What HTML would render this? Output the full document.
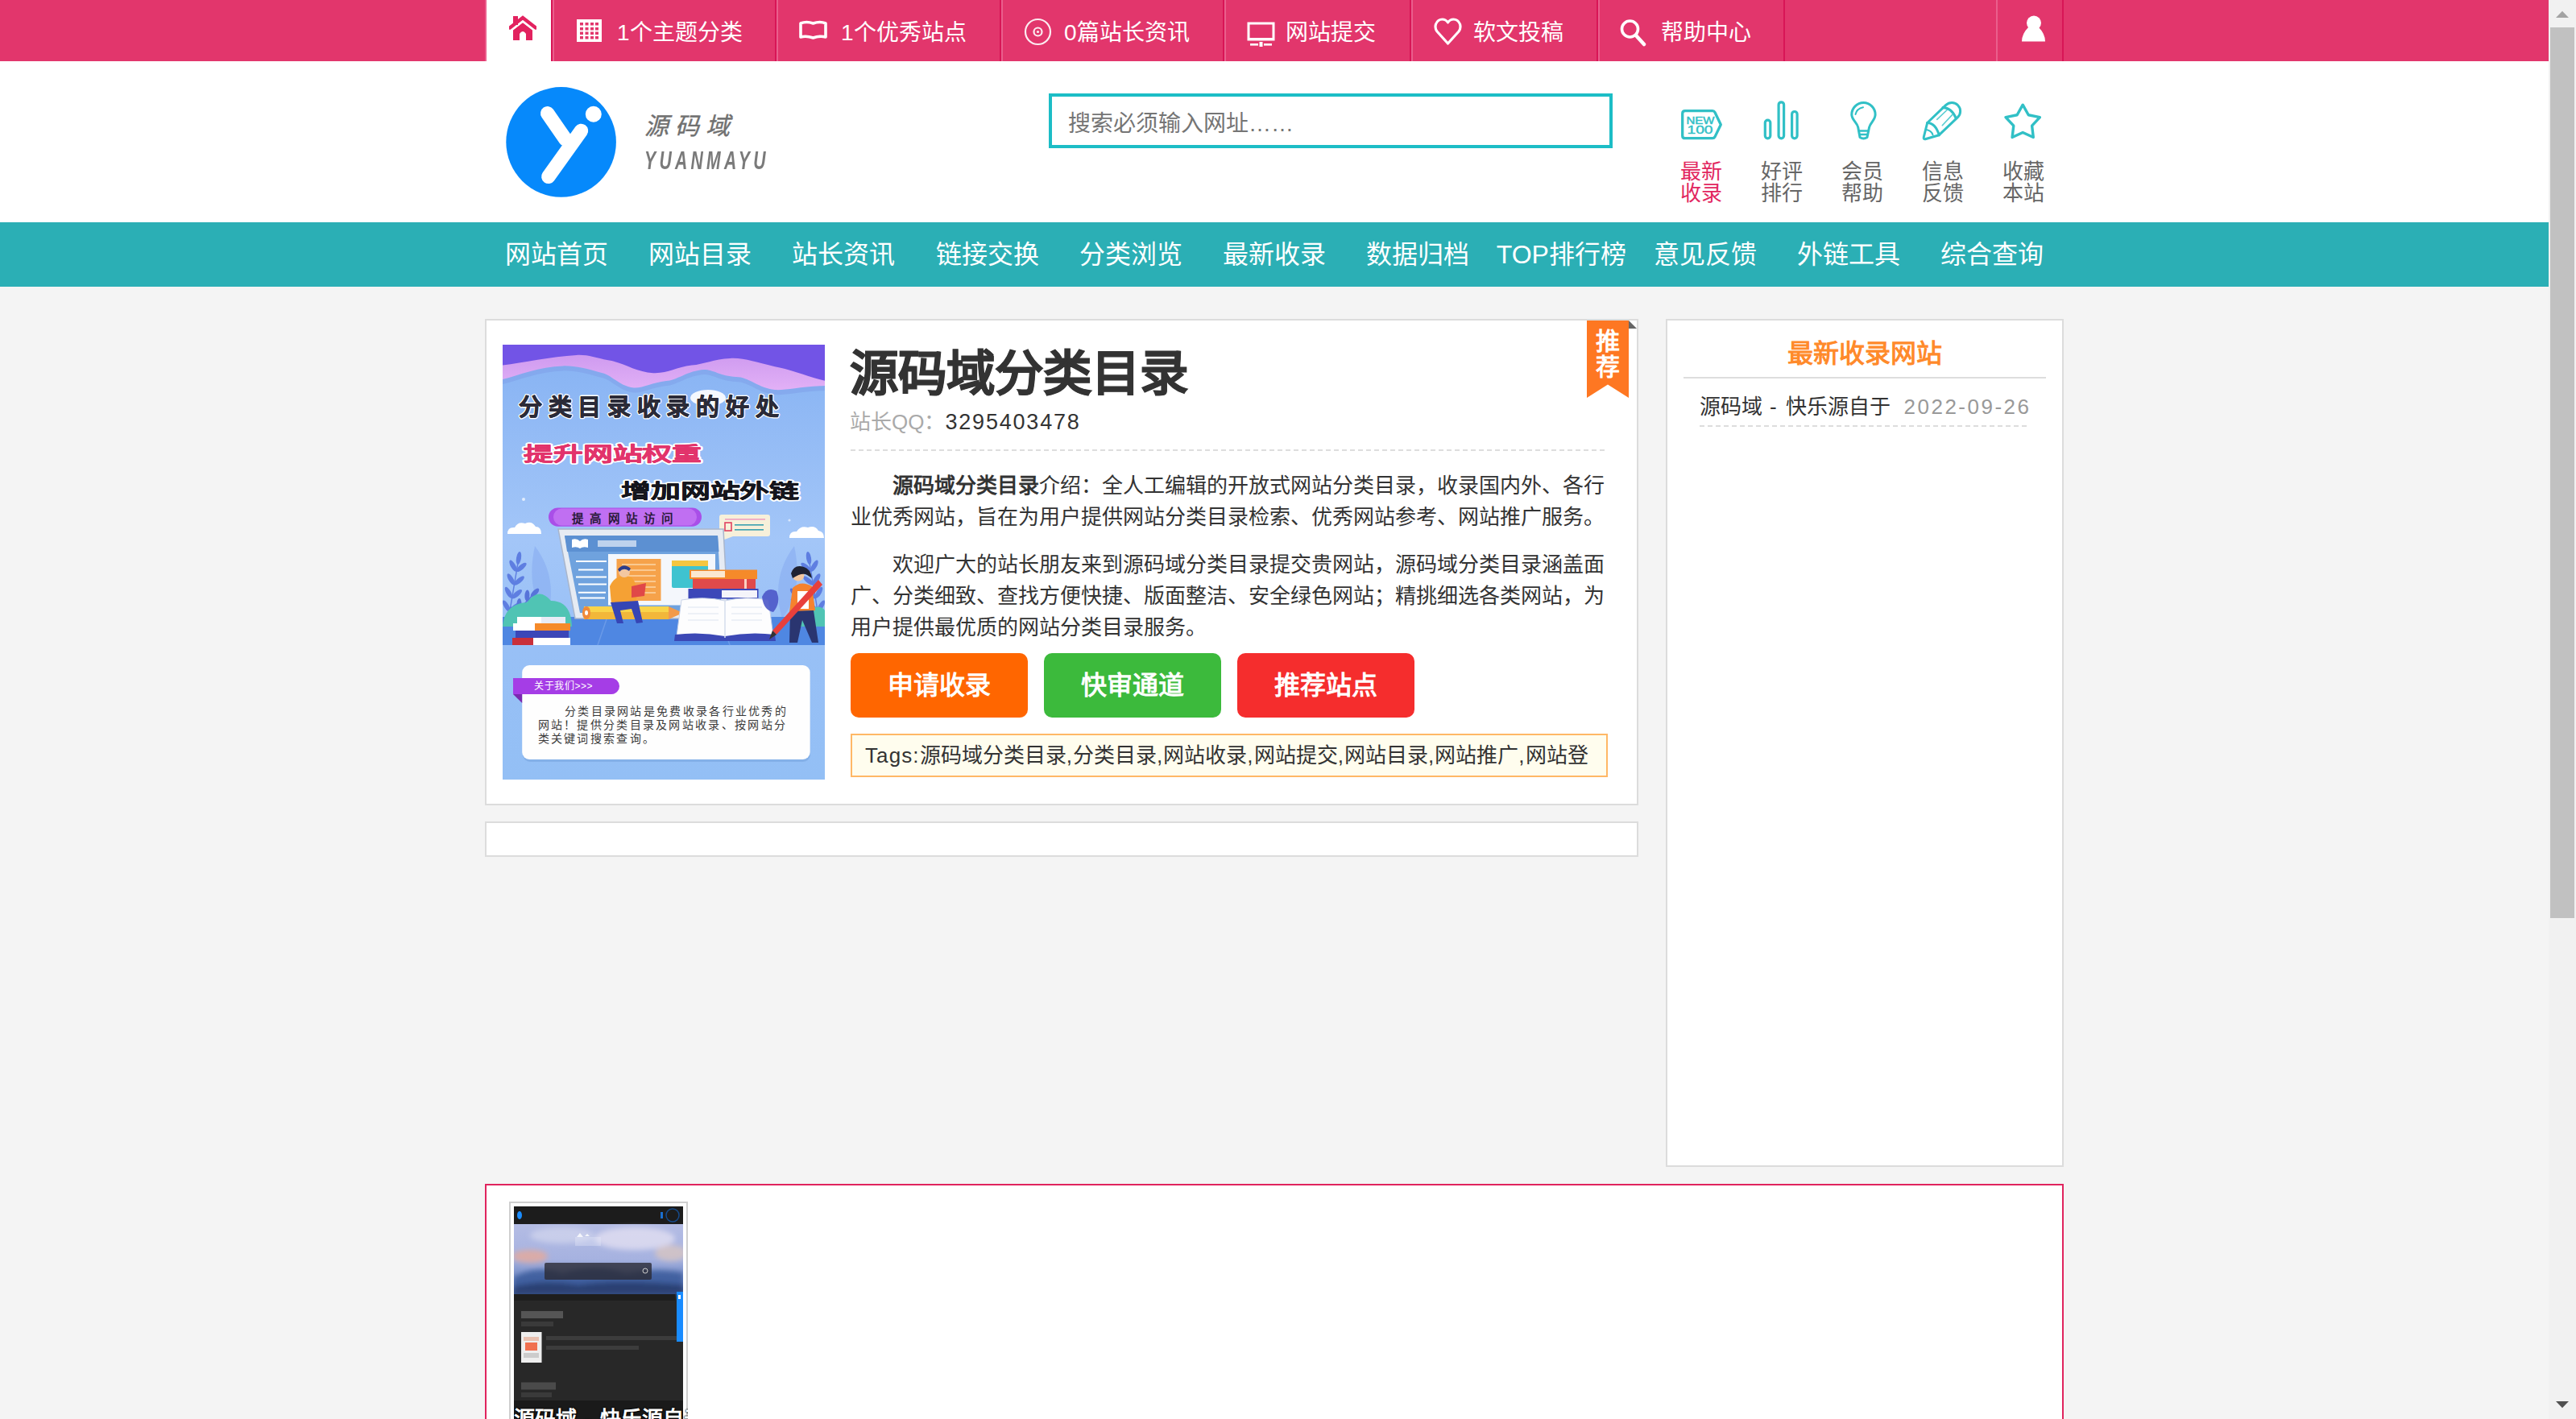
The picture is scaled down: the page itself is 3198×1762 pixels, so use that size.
<!DOCTYPE html>
<html lang="zh-CN"><head><meta charset="utf-8"><title>源码域分类目录</title>
<style>
*{margin:0;padding:0;box-sizing:border-box}
html,body{width:3198px;height:1762px;overflow:hidden}
body{position:relative;background:#f4f4f4;font-family:"Liberation Sans",sans-serif;color:#333}
.a{position:absolute}
#top{left:0;top:0;width:3164px;height:76px;background:#e2366c}
.li{position:absolute;top:0;height:76px;border-left:2px solid #ea5e8c;border-right:2px solid #d81556}
.li .t{position:absolute;top:2px;line-height:77px;font-size:28px;color:#fff;white-space:nowrap}
#hdr{left:0;top:76px;width:3164px;height:200px;background:#fff}
#nav{left:0;top:276px;width:3164px;height:80px;background:#2bafb5}
.nv{position:absolute;top:0;width:178.18px;line-height:80px;text-align:center;font-size:32px;color:#fff;white-space:nowrap}
.hi{position:absolute;top:123.5px;width:100px;text-align:center;font-size:26px;line-height:27px;color:#666}
.btn{position:absolute;top:811px;width:220px;height:80px;border-radius:10px;color:#fff;font-weight:bold;font-size:32px;line-height:80px;text-align:center}
.c{font-style:normal;letter-spacing:1.1px}
.box{position:absolute;background:#fff;border:2px solid #dcdcdc}
#scroll{left:3164px;top:0;width:34px;height:1762px;background:#f1f1f1}
</style></head><body>
<div id="top" class="a">
  <div class="li" style="left:602px;width:84px"><div class="a" style="left:0;top:0;width:80px;height:76px;background:#fff"></div>
    <svg class="a" style="left:28px;top:19px" width="34" height="32" viewBox="0 0 34 32"><g fill="#e2225f"><rect x="5" y="1" width="6" height="11"/><path d="M1 15.5 L17 3 L33 15.5" fill="none" stroke="#e2225f" stroke-width="4.2" stroke-linecap="round"/><path d="M5 18 L17 9 L29 18 V31 H21 V23 Q17 17 13 23 V31 H5 Z"/></g><path d="M1 15.5 L17 3 L33 15.5" fill="none" stroke="#fff" stroke-width="1.6" transform="translate(0,5.2)"/></svg>
  </div>
  <div class="li" style="left:686px;width:278px">
    <svg class="a" style="left:28px;top:24px" width="31" height="28" viewBox="0 0 31 28"><rect x="0" y="0" width="31" height="28" fill="#fff"/><g fill="#e2366c"><rect x="4" y="4" width="4" height="3.5"/><rect x="10.5" y="4" width="4" height="3.5"/><rect x="17" y="4" width="4" height="3.5"/><rect x="23" y="4" width="4" height="3.5"/><rect x="4" y="10" width="4" height="3.5"/><rect x="10.5" y="10" width="4" height="3.5"/><rect x="17" y="10" width="4" height="3.5"/><rect x="23" y="10" width="4" height="3.5"/><rect x="4" y="15.5" width="4" height="3.5"/><rect x="10.5" y="15.5" width="4" height="3.5"/><rect x="17" y="15.5" width="4" height="3.5"/><rect x="23" y="15.5" width="4" height="3.5"/><rect x="4" y="21" width="4" height="3.5"/><rect x="10.5" y="21" width="4" height="3.5"/><rect x="17" y="21" width="4" height="3.5"/><rect x="23" y="21" width="4" height="3.5"/></g></svg>
    <span class="t" style="left:78px">1个主题分类</span></div>
  <div class="li" style="left:964px;width:279px">
    <svg class="a" style="left:25px;top:25px" width="37" height="27" viewBox="0 0 37 27"><path d="M3 4 Q10 1 18.5 4 Q27 1 34 4 V21 Q27 19 18.5 22 Q10 19 3 21 Z" fill="none" stroke="#fff" stroke-width="3.6" stroke-linejoin="round"/></svg>
    <span class="t" style="left:78px">1个优秀站点</span></div>
  <div class="li" style="left:1243px;width:277px">
    <svg class="a" style="left:26px;top:22px" width="35" height="35" viewBox="0 0 35 35"><circle cx="17.5" cy="17.5" r="15.5" fill="none" stroke="#fff" stroke-width="2.2" opacity=".9"/><circle cx="17.5" cy="17.5" r="5" fill="none" stroke="#fff" stroke-width="2.2" opacity=".9"/><circle cx="17.5" cy="17.5" r="1.6" fill="#fff" opacity=".9"/></svg>
    <span class="t" style="left:76px">0篇站长资讯</span></div>
  <div class="li" style="left:1520px;width:232px">
    <svg class="a" style="left:26px;top:27px" width="35" height="32" viewBox="0 0 35 32"><rect x="2" y="2" width="31" height="20" fill="none" stroke="#fff" stroke-width="3"/><rect x="1" y="20" width="33" height="3" fill="#fff"/><rect x="4" y="27" width="10" height="2.6" fill="#fff"/><rect x="21" y="27" width="10" height="2.6" fill="#fff"/><rect x="15.5" y="25" width="4" height="6" fill="#fff"/></svg>
    <span class="t" style="left:74px">网站提交</span></div>
  <div class="li" style="left:1752px;width:232px">
    <svg class="a" style="left:26px;top:22px" width="35" height="35" viewBox="0 0 35 35"><path d="M17.5 32 L4 17 Q1 13 2.5 8 Q5 2 10.5 2 Q15 2 17.5 6 Q20 2 24.5 2 Q30 2 32.5 8 Q34 13 31 17 Z" fill="none" stroke="#fff" stroke-width="3.2" stroke-linejoin="round"/></svg>
    <span class="t" style="left:75px">软文投稿</span></div>
  <div class="li" style="left:1984px;width:232px;border-left-color:#ea5e8c">
    <svg class="a" style="left:24px;top:23px" width="35" height="36" viewBox="0 0 35 36"><circle cx="13.5" cy="13" r="10" fill="none" stroke="#fff" stroke-width="3.6"/><path d="M21 21 L31 32" stroke="#fff" stroke-width="4.5" stroke-linecap="round"/></svg>
    <span class="t" style="left:76px">帮助中心</span></div>
  <div class="li" style="left:2478px;width:84px">
    <svg class="a" style="left:29px;top:18px" width="32" height="35" viewBox="0 0 32 35"><circle cx="16" cy="10.5" r="9" fill="#fff"/><path d="M9 16 Q1 24 1 33.5 H30 Q30 24 22 16 Z" fill="#fff"/></svg>
  </div>
</div>
<div id="hdr" class="a">
  <svg class="a" style="left:626px;top:30px" width="142" height="142" viewBox="0 0 142 142"><circle cx="70.6" cy="70.4" r="68.3" fill="#0689fb"/><path d="M53.7 34.7 L76 67" stroke="#fff" stroke-width="17.4" stroke-linecap="round"/><path d="M95.5 56.4 L54.8 113.4" stroke="#fff" stroke-width="17.4" stroke-linecap="round"/><circle cx="110.8" cy="35.7" r="10" fill="#fff"/></svg>
  <div class="a" style="left:800px;top:61px;font-size:30px;line-height:40px;color:#707070;font-style:italic;letter-spacing:8px;white-space:nowrap;-webkit-text-stroke:.4px #707070">源码域</div>
  <div class="a" style="left:800px;top:102.5px;font-size:32px;line-height:40px;color:#7a7a7a;font-style:italic;font-weight:bold;letter-spacing:6.5px;white-space:nowrap;transform:scaleX(.66);transform-origin:0 0">YUANMAYU</div>
  <div class="a" style="left:1302px;top:40px;width:700px;height:68px;border:4px solid #1cbdc6;background:#fff"></div>
  <div class="a" style="left:1326px;top:43.5px;line-height:68px;font-size:28px;color:#757575;white-space:nowrap">搜索必须输入网址……</div>
  <svg class="a" style="left:2084px;top:56px" width="58" height="46" viewBox="0 0 58 46"><path d="M8 5.7 H42 Q44 5.7 45 7.5 L52.3 22.7 L45 37.9 Q44 39.7 42 39.7 H8 Q4.7 39.7 4.7 36.4 V9 Q4.7 5.7 8 5.7 Z" fill="none" stroke="#31c0c6" stroke-width="3.3" stroke-linejoin="round"/><text x="9.5" y="21.8" font-family="Liberation Sans" font-size="13" fill="#31c0c6" stroke="#31c0c6" stroke-width=".5" textLength="35" lengthAdjust="spacingAndGlyphs">NEW</text><text x="10.5" y="33.8" font-family="Liberation Sans" font-size="14.5" fill="#31c0c6" stroke="#31c0c6" stroke-width=".4" textLength="32" lengthAdjust="spacingAndGlyphs">100</text></svg>
  <svg class="a" style="left:2186px;top:46px" width="52" height="56" viewBox="0 0 52 56"><g fill="none" stroke="#31c0c6" stroke-width="3.2"><rect x="5.3" y="27.1" width="6.5" height="22.7" rx="3.25"/><rect x="22.1" y="4.8" width="6.5" height="45" rx="3.25"/><rect x="38.6" y="16.5" width="6.5" height="33.3" rx="3.25"/></g></svg>
  <svg class="a" style="left:2290px;top:46px" width="46" height="56" viewBox="0 0 46 56"><g fill="none" stroke="#31c0c6" stroke-width="3" stroke-linecap="round" stroke-linejoin="round"><path d="M16.7 36 C15.5 30 8.8 27 8.8 20.25 A14.65 14.65 0 1 1 38.1 20.25 C38.1 27 32 30 30.6 36 L28 48.5 Q23.5 51.5 19 48.5 Z"/><path d="M17.8 40.5 H29.6 M18.8 45 H28.4" stroke-width="2.4"/><path d="M13.5 20 Q15 13 23 11.3" stroke-width="2"/></g></svg>
  <svg class="a" style="left:2383px;top:46px" width="62" height="56" viewBox="0 0 62 56"><g fill="none" stroke="#31c0c6" stroke-width="3" stroke-linejoin="round" stroke-linecap="round"><path d="M9.7 30.5 L32.8 8.4 A10.5 10.5 0 0 1 47.4 23.6 L24.3 45.7 L8 50.5 Q4.5 51.5 5.3 48 Z"/><path d="M9.7 30.5 Q20 31 24.3 45.7"/><path d="M29 11.6 Q40 12 45.3 24.9"/><path d="M21.7 26.3 L34.2 14.5 M28.3 33.7 L40.8 20.4" stroke-width="1.6" opacity=".8"/><path d="M8.4 38.9 Q15 40 16.5 45.5" stroke-width="2"/></g></svg>
  <svg class="a" style="left:2484px;top:48px" width="56" height="54" viewBox="0 0 56 54"><path d="M27.20 6.20 L34.25 18.79 L48.41 21.61 L38.61 32.21 L40.31 46.54 L27.20 40.50 L14.09 46.54 L15.79 32.21 L5.99 21.61 L20.15 18.79 Z" fill="none" stroke="#31c0c6" stroke-width="3.4" stroke-linejoin="round"/></svg>
  <div class="hi" style="left:2062px;color:#e2265f">最新<br>收录</div>
  <div class="hi" style="left:2162px">好评<br>排行</div>
  <div class="hi" style="left:2262px">会员<br>帮助</div>
  <div class="hi" style="left:2362px">信息<br>反馈</div>
  <div class="hi" style="left:2462px">收藏<br>本站</div>
</div>
<div id="nav" class="a">
  <div class="nv" style="left:602px">网站首页</div>
  <div class="nv" style="left:780.18px">网站目录</div>
  <div class="nv" style="left:958.36px">站长资讯</div>
  <div class="nv" style="left:1136.55px">链接交换</div>
  <div class="nv" style="left:1314.73px">分类浏览</div>
  <div class="nv" style="left:1492.91px">最新收录</div>
  <div class="nv" style="left:1671.09px">数据归档</div>
  <div class="nv" style="left:1849.27px">TOP排行榜</div>
  <div class="nv" style="left:2027.45px">意见反馈</div>
  <div class="nv" style="left:2205.64px">外链工具</div>
  <div class="nv" style="left:2383.82px">综合查询</div>
</div>
<div class="box" style="left:602px;top:396px;width:1432px;height:604px"></div>
<div id="poster" class="a" style="left:624px;top:428px;width:400px;height:540px;overflow:hidden;background:#95c0f5"><svg class="a" style="left:0;top:0" width="400" height="540" viewBox="0 0 400 540">
<defs>
<linearGradient id="pbg" x1="0" y1="0" x2="0" y2="1"><stop offset="0" stop-color="#86b2f3"/><stop offset=".45" stop-color="#a3c6f8"/><stop offset=".7" stop-color="#98c0f6"/><stop offset="1" stop-color="#93bff5"/></linearGradient>
<linearGradient id="lav" x1="0" y1="0" x2="0" y2="1"><stop offset="0" stop-color="#c994ee"/><stop offset="1" stop-color="#e2b0f6"/></linearGradient>
</defs>
<rect width="400" height="540" fill="url(#pbg)"/>
<path d="M0 0 H400 V51 C370 52 350 57 338 56 C318 54 305 40 290 40 C270 39 262 31 250 31 C230 32 215 45 203 45 C185 47 175 54 163 53.5 C145 52 135 37 123 35 C105 30 90 26 75 26.4 C45 27 20 38 0 43 Z" fill="#7d9de8" opacity=".5" transform="translate(0,6)"/>
<path d="M0 0 H400 V51 C370 52 350 57 338 56 C318 54 305 40 290 40 C270 39 262 31 250 31 C230 32 215 45 203 45 C185 47 175 54 163 53.5 C145 52 135 37 123 35 C105 30 90 26 75 26.4 C45 27 20 38 0 43 Z" fill="url(#lav)"/>
<path d="M0 0 H400 V44.7 C380 40 355 30 338 27.2 C315 22 300 16 282.5 16.9 C262 18 250 24 234.7 25.6 C215 28 205 36 187 35.2 C165 34 150 22 131 19.3 C115 16 105 12 91.5 12.9 C60 15 25 22 0 25.6 Z" fill="#7254e6"/>
<ellipse cx="255" cy="66" rx="22" ry="10" fill="#fff" opacity=".9"/>
<g font-family="Liberation Sans" font-weight="bold" stroke-linejoin="round" paint-order="stroke" lengthAdjust="spacingAndGlyphs">
<text x="20" y="88" font-size="29" letter-spacing="7.7" fill="#2b2b38" stroke="#fff" stroke-width="3.5">分类目录收录的好处</text>
<text x="20" y="88" font-size="29" letter-spacing="7.7" fill="#2b2b38" stroke="#2b2b38" stroke-width="0.9">分类目录收录的好处</text>
<text x="26" y="144" font-size="24" textLength="221" lengthAdjust="spacingAndGlyphs" fill="#e2336b" stroke="#fff" stroke-width="4">提升网站权重</text>
<text x="26" y="144" font-size="24" textLength="221" lengthAdjust="spacingAndGlyphs" fill="#e2336b" stroke="#e2336b" stroke-width="0.5">提升网站权重</text>
<text x="147" y="190" font-size="24" textLength="221" lengthAdjust="spacingAndGlyphs" fill="#15151c" stroke="#fff" stroke-width="4">增加网站外链</text>
<text x="147" y="190" font-size="24" textLength="221" lengthAdjust="spacingAndGlyphs" fill="#15151c" stroke="#15151c" stroke-width="0.5">增加网站外链</text>
</g>
<rect x="57" y="202.4" width="190" height="23.3" rx="11.6" fill="#a94fe8"/>
<rect x="63" y="203.5" width="178" height="21" rx="10.5" fill="#c06ff2"/>
<text x="86" y="221" font-family="Liberation Sans" font-weight="bold" font-size="14.5" letter-spacing="8.3" fill="#2a1a3a">提高网站访问</text>
<g fill="#fff">
<path d="M6 235 Q6 226 15 227 Q19 219 28 222 Q36 218 41 226 Q48 226 48 235 Z"/>
<path d="M356 240 Q356 231 365 232 Q370 224 379 227 Q388 224 392 231 Q399 232 399 240 Z"/>
<circle cx="26" cy="192" r="2" opacity=".7"/><circle cx="356" cy="218" r="1.6" opacity=".6"/><circle cx="110" cy="260" r="1.4" opacity=".6"/>
</g>
<rect x="269" y="211" width="63" height="27" rx="3" fill="#f7f0da"/>
<path d="M278 236 L262 247 L286 238 Z" fill="#f7f0da"/>
<rect x="276" y="216" width="50" height="1.6" fill="#f0a0c0"/>
<rect x="276" y="221" width="8" height="10" fill="none" stroke="#e04060" stroke-width="1.6"/>
<rect x="288" y="223" width="36" height="1.6" fill="#3aa0b0"/><rect x="288" y="229" width="36" height="1.6" fill="#3aa0b0"/>
<!-- leaves -->
<g opacity=".95"><g fill="#8db2f3" opacity=".8"><path d="M40 250 Q70 290 55 340 Q28 305 40 250 Z"/><path d="M362 250 Q332 290 347 340 Q374 305 362 250 Z"/></g><path d="M6.0 348.0 L20.0 265.0" stroke="#5b7be0" stroke-width="1.5"/><ellipse cx="14.9" cy="326.2" rx="8.0" ry="3.0" transform="rotate(-40.4 14.9 326.2)" fill="#5b7be0"/><ellipse cx="4.7" cy="324.5" rx="8.0" ry="3.0" transform="rotate(-120.4 4.7 324.5)" fill="#5b7be0"/><ellipse cx="17.7" cy="309.6" rx="8.0" ry="3.0" transform="rotate(-40.4 17.7 309.6)" fill="#5b7be0"/><ellipse cx="7.5" cy="307.9" rx="8.0" ry="3.0" transform="rotate(-120.4 7.5 307.9)" fill="#5b7be0"/><ellipse cx="20.5" cy="293.0" rx="8.0" ry="3.0" transform="rotate(-40.4 20.5 293.0)" fill="#5b7be0"/><ellipse cx="10.3" cy="291.3" rx="8.0" ry="3.0" transform="rotate(-120.4 10.3 291.3)" fill="#5b7be0"/><ellipse cx="23.3" cy="276.4" rx="8.0" ry="3.0" transform="rotate(-40.4 23.3 276.4)" fill="#5b7be0"/><ellipse cx="13.1" cy="274.7" rx="8.0" ry="3.0" transform="rotate(-120.4 13.1 274.7)" fill="#5b7be0"/><ellipse cx="20.0" cy="265.0" rx="8.0" ry="3.0" transform="rotate(-80.4 20.0 265.0)" fill="#5b7be0"/><path d="M0.0 350.0 L40.0 308.0" stroke="#5470d8" stroke-width="1.5"/><ellipse cx="17.0" cy="338.7" rx="7.0" ry="3.0" transform="rotate(-6.4 17.0 338.7)" fill="#5470d8"/><ellipse cx="10.4" cy="332.5" rx="7.0" ry="3.0" transform="rotate(-86.4 10.4 332.5)" fill="#5470d8"/><ellipse cx="27.0" cy="328.2" rx="7.0" ry="3.0" transform="rotate(-6.4 27.0 328.2)" fill="#5470d8"/><ellipse cx="20.4" cy="322.0" rx="7.0" ry="3.0" transform="rotate(-86.4 20.4 322.0)" fill="#5470d8"/><ellipse cx="37.0" cy="317.7" rx="7.0" ry="3.0" transform="rotate(-6.4 37.0 317.7)" fill="#5470d8"/><ellipse cx="30.4" cy="311.5" rx="7.0" ry="3.0" transform="rotate(-86.4 30.4 311.5)" fill="#5470d8"/><ellipse cx="40.0" cy="308.0" rx="7.0" ry="3.0" transform="rotate(-46.4 40.0 308.0)" fill="#5470d8"/><path d="M394.0 348.0 L380.0 265.0" stroke="#5b7be0" stroke-width="1.5"/><ellipse cx="395.3" cy="324.5" rx="8.0" ry="3.0" transform="rotate(-59.6 395.3 324.5)" fill="#5b7be0"/><ellipse cx="385.1" cy="326.2" rx="8.0" ry="3.0" transform="rotate(-139.6 385.1 326.2)" fill="#5b7be0"/><ellipse cx="392.5" cy="307.9" rx="8.0" ry="3.0" transform="rotate(-59.6 392.5 307.9)" fill="#5b7be0"/><ellipse cx="382.3" cy="309.6" rx="8.0" ry="3.0" transform="rotate(-139.6 382.3 309.6)" fill="#5b7be0"/><ellipse cx="389.7" cy="291.3" rx="8.0" ry="3.0" transform="rotate(-59.6 389.7 291.3)" fill="#5b7be0"/><ellipse cx="379.5" cy="293.0" rx="8.0" ry="3.0" transform="rotate(-139.6 379.5 293.0)" fill="#5b7be0"/><ellipse cx="386.9" cy="274.7" rx="8.0" ry="3.0" transform="rotate(-59.6 386.9 274.7)" fill="#5b7be0"/><ellipse cx="376.7" cy="276.4" rx="8.0" ry="3.0" transform="rotate(-139.6 376.7 276.4)" fill="#5b7be0"/><ellipse cx="380.0" cy="265.0" rx="8.0" ry="3.0" transform="rotate(-99.6 380.0 265.0)" fill="#5b7be0"/><path d="M400.0 350.0 L362.0 308.0" stroke="#5470d8" stroke-width="1.5"/><ellipse cx="390.2" cy="332.5" rx="7.0" ry="3.0" transform="rotate(-92.1 390.2 332.5)" fill="#5470d8"/><ellipse cx="383.6" cy="338.5" rx="7.0" ry="3.0" transform="rotate(-172.1 383.6 338.5)" fill="#5470d8"/><ellipse cx="380.7" cy="322.0" rx="7.0" ry="3.0" transform="rotate(-92.1 380.7 322.0)" fill="#5470d8"/><ellipse cx="374.1" cy="328.0" rx="7.0" ry="3.0" transform="rotate(-172.1 374.1 328.0)" fill="#5470d8"/><ellipse cx="371.2" cy="311.5" rx="7.0" ry="3.0" transform="rotate(-92.1 371.2 311.5)" fill="#5470d8"/><ellipse cx="364.6" cy="317.5" rx="7.0" ry="3.0" transform="rotate(-172.1 364.6 317.5)" fill="#5470d8"/><ellipse cx="362.0" cy="308.0" rx="7.0" ry="3.0" transform="rotate(-132.1 362.0 308.0)" fill="#5470d8"/></g>
<!-- floor -->
<rect x="0" y="338" width="400" height="35" fill="#4f87e2"/>
<path d="M130 338 L118 373 M270 338 L282 373" stroke="#6a9ae8" stroke-width="1.5"/>
<!-- bush -->
<path d="M0 350 Q2 322 30 320 Q45 300 60 318 Q85 318 86 350 Z" fill="#50c4b4"/>
<path d="M360 350 Q362 330 380 328 Q395 322 400 330 V350 Z" fill="#50c4b4"/>
<!-- laptop -->
<path d="M69 229 L274 229 L280 340 L90 340 Z" fill="#e6ebf3" stroke="#a9b6cc" stroke-width="1.5"/>
<path d="M77 237 L267 237 L272 333 L96 333 Z" fill="#6fa2de"/>
<path d="M77 237 L267 237 L268.5 257 L80 257 Z" fill="#5c90d2"/>
<path d="M86 242 Q92 240 96 244 Q100 240 106 242 V252 Q100 250 96 253 Q92 250 86 252 Z" fill="#fff"/>
<rect x="118" y="243" width="48" height="8" fill="#fff" opacity=".6"/>
<rect x="131" y="260" width="133" height="63.5" fill="#f4f7fc"/>
<rect x="141.5" y="266" width="55" height="52" fill="#f6a24a"/>
<g stroke="#fbd6a8" stroke-width="1.5"><path d="M148 273 H190 M148 280 H190 M148 287 H190 M148 294 H190 M148 301 H190 M148 308 H190"/></g>
<rect x="210" y="268" width="45" height="34" rx="2" fill="#3fc3d0"/>
<rect x="210" y="268" width="45" height="7" fill="#f5c640"/>
<g stroke="#fff" stroke-width="2"><path d="M91 269 H129 M94 279.5 H125 M91 288.5 H129 M94 297.5 H129 M94 307.7 H128 M96 314.5 H127"/></g>
<!-- pencil -->
<rect x="101" y="325" width="105" height="16" fill="#f9d44a"/>
<rect x="101" y="332" width="105" height="9" fill="#f2b73a"/>
<path d="M206 325 L224 333 L206 341 Z" fill="#f29a4a"/>
<ellipse cx="104" cy="333" rx="5" ry="8" fill="#f08a3a"/><ellipse cx="104" cy="333" rx="2" ry="3" fill="#fff"/>
<!-- man -->
<path d="M133 300 Q140 284 158 288 Q168 292 166 320 L135 322 Z" fill="#f5a134"/>
<circle cx="151" cy="282" r="7" fill="#f3c7a0"/><path d="M143 279 Q150 270 159 278 L157 281 Q150 276 145 282 Z" fill="#2e3d8a"/>
<path d="M160 300 L178 296 L176 312 L160 314 Z" fill="#e04848"/>
<path d="M134 320 L168 318 L174 345 L166 346 L160 328 L146 330 L150 346 L142 346 Z" fill="#3645b5"/>
<!-- book stack right -->
<rect x="232" y="279.5" width="84" height="11.5" fill="#f58a2a"/><rect x="234" y="281" width="42" height="8" fill="#fbe8d0"/>
<rect x="236" y="291" width="78" height="12" fill="#e04a4a"/><rect x="300" y="291" width="3" height="12" fill="#fbd0c0"/>
<rect x="230.5" y="303" width="87" height="12.6" fill="#3b47b8"/><rect x="272" y="305" width="44" height="9" fill="#f4f4fa"/>
<!-- open book -->
<path d="M222 317 Q250 312 276 318 Q302 312 330 317 L336 362 Q305 358 276 364 Q247 358 216 362 Z" fill="#fdfdfe" stroke="#c9d3e8" stroke-width="1"/>
<path d="M214 360 Q245 356 276 362 Q307 356 338 360 L339 368 L213 368 Z" fill="#3c48b5"/>
<path d="M276 318 V364" stroke="#d4dcec" stroke-width="1.5"/>
<g stroke="#dde4f0" stroke-width="1"><path d="M230 326 H268 M230 334 H268 M230 342 H268 M284 326 H322 M284 334 H322 M284 342 H322"/></g>
<!-- woman -->
<path d="M360 302 Q370 292 384 300 L388 330 L356 332 Z" fill="#f5822e"/>
<rect x="366" y="306" width="14" height="22" fill="#fff"/>
<circle cx="367" cy="286" r="7.5" fill="#f3c7a0"/><path d="M358 284 Q362 272 374 276 Q382 278 384 290 L378 286 Q372 282 360 290 Z" fill="#1f2233"/>
<path d="M357 331 L386 330 L392 370 L384 370 L372 342 L366 370 L356 370 Z" fill="#2a3570"/>
<path d="M335 355 L392 292 L397 298 L340 360 Z" fill="#e8403c"/>
<path d="M335 355 L340 360 L331 366 Z" fill="#333"/>
<path d="M322 313 Q328 300 340 306 Q346 320 336 332 Q324 330 322 313 Z" fill="#4d58c8" opacity=".9"/>
<!-- left books -->
<rect x="18" y="338" width="60" height="8" fill="#fff"/><rect x="48" y="338" width="30" height="8" fill="#e8ecf6"/>
<rect x="13" y="346" width="71" height="9" fill="#fff"/><rect x="40" y="346" width="44" height="9" fill="#f58a2a"/>
<rect x="16" y="355" width="66" height="9" fill="#3b47b8"/>
<rect x="12" y="364" width="72" height="9" fill="#c9303a"/><rect x="38" y="364" width="46" height="9" fill="#fff"/>
<!-- bottom card -->
<rect x="25" y="400" width="357" height="118" rx="9" fill="#7aa6e0" opacity=".6"/>
<rect x="24.2" y="398" width="357.5" height="117" rx="9" fill="#fefefe"/>
<path d="M13 434 L24.2 434 L24.2 445 Z" fill="#7a2ab0"/>
<path d="M13 414 H135 A10 10 0 0 1 135 434 H13 Z" fill="#a53de6"/>
<text x="39" y="428" font-family="Liberation Sans" font-size="12" letter-spacing="0.6" fill="#fff">关于我们&gt;&gt;&gt;</text>
<g font-family="Liberation Sans" font-size="14" letter-spacing="2.3" fill="#3a3a3a">
<text x="77" y="459.5">分类目录网站是免费收录各行业优秀的</text>
<text x="43.5" y="476.5">网站！提供分类目录及网站收录、按网站分</text>
<text x="43.5" y="493.5">类关键词搜索查询。</text>
</g>
</svg>
</div>
<div class="a" style="left:1055px;top:422px;font-size:60.5px;line-height:84px;font-weight:bold;color:#333;white-space:nowrap;-webkit-text-stroke:1px #333">源码域分类目录</div>
<div class="a" style="left:1055px;top:505px;font-size:26px;line-height:39px;color:#aaa;white-space:nowrap">站长QQ：<span style="color:#333;font-family:'Liberation Sans';font-size:27px;letter-spacing:1.8px">3295403478</span></div>
<div class="a" style="left:1056px;top:558px;width:940px;height:2px;background:repeating-linear-gradient(90deg,#ddd 0 6px,transparent 6px 10px)"></div>
<div class="a" style="left:1056px;top:584px;width:940px;font-size:26px;line-height:39px;color:#333;text-indent:52px">
<p><b>源码域分类目录</b>介绍：全人工编辑的开放式网站分类目录，收录国内外、各行业优秀网站，旨在为用户提供网站分类目录检索、优秀网站参考、网站推广服务。</p>
<p style="margin-top:20px">欢迎广大的站长朋友来到源码域分类目录提交贵网站，源码域分类目录涵盖面广、分类细致、查找方便快捷、版面整洁、安全绿色网站；精挑细选各类网站，为用户提供最优质的网站分类目录服务。</p>
</div>
<div class="btn" style="left:1056px;background:#ff6600">申请收录</div>
<div class="btn" style="left:1296px;background:#3cba3c">快审通道</div>
<div class="btn" style="left:1536px;background:#f52d2d">推荐站点</div>
<div class="a" style="left:1056px;top:911px;width:940px;height:54px;border:2px solid #ffb866;background:#fffdee;overflow:hidden;font-size:26px;line-height:50px;padding-left:16px;padding-right:14px;color:#333;word-break:break-all"><span style="letter-spacing:1.1px">Tags:</span>源码域分类目录<i class="c">,</i>分类目录<i class="c">,</i>网站收录<i class="c">,</i>网站提交<i class="c">,</i>网站目录<i class="c">,</i>网站推广<i class="c">,</i>网站登录<i class="c">,</i>网站大全</div>
<svg class="a" style="left:1970px;top:398px" width="62" height="96" viewBox="0 0 62 96"><path d="M0 0 H52 V96 L26 79.6 L0 96 Z" fill="#fe7722"/><path d="M52 0 L62 10 H52 Z" fill="#666"/></svg>
<div class="a" style="left:1970px;top:408px;width:52px;text-align:center;font-size:30px;line-height:32px;color:#fff;font-weight:bold">推<br>荐</div>
<div class="box" style="left:602px;top:1020px;width:1432px;height:44px"></div>
<div class="box" style="left:2068px;top:396px;width:494px;height:1053px"></div>
<div class="a" style="left:2068px;top:416px;width:494px;text-align:center;font-size:32px;line-height:46px;font-weight:bold;color:#ff8a2b">最新收录网站</div>
<div class="a" style="left:2090px;top:468px;width:450px;height:2px;background:#ddd"></div>
<div class="a" style="left:2110px;top:485.5px;font-size:26px;line-height:39px;color:#333;white-space:nowrap">源码域<span style="letter-spacing:1.8px"> - </span>快乐源自于<span style="color:#999;margin-left:17px;letter-spacing:2.5px">2022-09-26</span></div>
<div class="a" style="left:2110px;top:528px;width:410px;height:2px;background:repeating-linear-gradient(90deg,#ddd 0 6px,transparent 6px 10px)"></div>
<div class="a" style="left:602px;top:1470px;width:1960px;height:400px;background:#fff;border:2px solid #e0245e"></div>
<div class="a" style="left:632px;top:1492px;width:222px;height:300px;border:2px solid #cfcfcf;background:#fff"></div>
<svg class="a" style="left:638px;top:1498px" width="210" height="264" viewBox="0 0 210 264">
<defs><linearGradient id="sky" x1="0" y1="0" x2="0" y2="1"><stop offset="0" stop-color="#b4bce4"/><stop offset=".5" stop-color="#a6b2e0"/><stop offset=".8" stop-color="#6a84c0"/><stop offset="1" stop-color="#3a5590"/></linearGradient>
<filter id="bl" x="-20%" y="-20%" width="140%" height="140%"><feGaussianBlur stdDeviation="3"/></filter><linearGradient id="skyh" x1="0" y1="0" x2="1" y2="0"><stop offset="0" stop-color="#e8b090" stop-opacity=".35"/><stop offset=".5" stop-color="#c0c8f0" stop-opacity="0"/><stop offset="1" stop-color="#f0c8a0" stop-opacity=".3"/></linearGradient></defs>
<rect width="210" height="264" fill="#282828"/>
<rect width="210" height="22" fill="#1c1c1c"/>
<ellipse cx="7" cy="11" rx="3" ry="5" fill="#1a8cff"/>
<rect x="182" y="7" width="3" height="8" fill="#1a6fd0"/><circle cx="197" cy="11" r="8" fill="none" stroke="#164a8a" stroke-width="1.5"/>
<rect y="22" width="210" height="87" fill="url(#sky)"/>
<g filter="url(#bl)">
<ellipse cx="150" cy="40" rx="50" ry="14" fill="#e8e4f4" opacity=".7"/>
<ellipse cx="60" cy="36" rx="40" ry="10" fill="#d8dcf0" opacity=".6"/>
<ellipse cx="20" cy="62" rx="22" ry="8" fill="#f0a890" opacity=".7"/>
<ellipse cx="195" cy="58" rx="20" ry="10" fill="#f4d0b0" opacity=".5"/>
<path d="M0 88 Q30 72 60 84 Q100 70 140 84 Q175 76 210 82 V109 H0 Z" fill="#3a5a9a" opacity=".85"/>
<path d="M0 100 Q40 90 80 98 Q130 90 210 98 V109 H0 Z" fill="#2a3f72"/>
</g>
<path d="M78 38 L82 33 L86 38 Z M88 37 L91 34 L94 37 Z" fill="#fff" opacity=".8"/>
<rect x="76" y="38" width="32" height="11" fill="#e8ecf8" opacity=".35"/>
<rect x="38" y="70" width="133" height="21" rx="2" fill="#2a2a35" opacity=".8"/>
<circle cx="163" cy="80" r="3" fill="none" stroke="#ccc" stroke-width="1"/>
<rect y="109" width="200" height="8" fill="#1e1e1e"/>
<rect x="202" y="106" width="8" height="62" fill="#1a8cff"/>
<rect x="204" y="110" width="3" height="5" fill="#fff"/>
<rect x="9" y="130" width="52" height="9" fill="#555"/><rect x="9" y="143" width="40" height="6" fill="#3a3a3a"/>
<rect x="9" y="156" width="25.5" height="38" fill="#eee"/><rect x="12" y="162" width="19" height="5" fill="#e8c0b0"/><rect x="14" y="169" width="15" height="10" fill="#f07050"/><rect x="12" y="182" width="19" height="6" fill="#ccc"/>
<rect x="40" y="161" width="162" height="5" fill="#3c3c3c"/><rect x="40" y="173" width="115" height="5" fill="#3c3c3c"/>
<rect x="9" y="218.5" width="43" height="9" fill="#4a4a4a"/><rect x="9" y="231" width="38" height="6" fill="#3a3a3a"/>
<rect y="241" width="210" height="23" fill="#1a1a1a"/>
</svg>
<div class="a" style="left:638px;top:1743px;font-size:26px;line-height:39px;font-weight:bold;color:#fff;white-space:nowrap;width:216px;overflow:hidden;text-shadow:0 0 2px #000,0 0 2px #000,1px 1px 1px #000">源码域<span style="letter-spacing:1.8px"> - </span>快乐源自于</div>
<div id="scroll" class="a"><div class="a" style="left:2px;top:34px;width:30px;height:1106px;background:#c1c1c1"></div>
<svg class="a" style="left:0;top:0" width="34" height="34"><path d="M9 22 L17 13.8 L25 22 Z" fill="#a3a3a3"/></svg>
<svg class="a" style="left:0;top:1728px" width="34" height="34"><path d="M9 12 L17 20.2 L25 12 Z" fill="#505050"/></svg></div>
</body></html>
